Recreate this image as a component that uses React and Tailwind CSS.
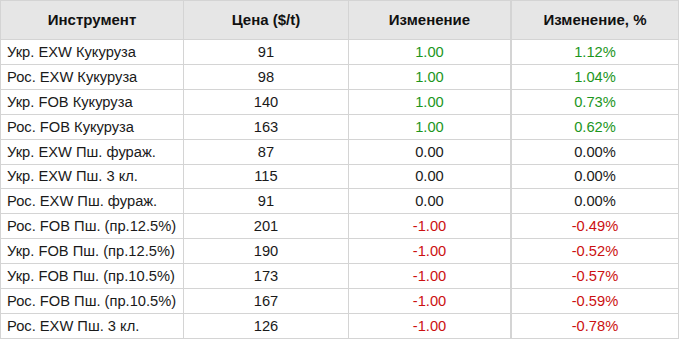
import React from "react";

const rows = [
  ["Укр. EXW Кукуруза", "91", "1.00", "1.12%", 1],
  ["Рос. EXW Кукуруза", "98", "1.00", "1.04%", 1],
  ["Укр. FOB Кукуруза", "140", "1.00", "0.73%", 1],
  ["Рос. FOB Кукуруза", "163", "1.00", "0.62%", 1],
  ["Укр. EXW Пш. фураж.", "87", "0.00", "0.00%", 0],
  ["Укр. EXW Пш. 3 кл.", "115", "0.00", "0.00%", 0],
  ["Рос. EXW Пш. фураж.", "91", "0.00", "0.00%", 0],
  ["Рос. FOB Пш. (пр.12.5%)", "201", "-1.00", "-0.49%", -1],
  ["Укр. FOB Пш. (пр.12.5%)", "190", "-1.00", "-0.52%", -1],
  ["Укр. FOB Пш. (пр.10.5%)", "173", "-1.00", "-0.57%", -1],
  ["Рос. FOB Пш. (пр.10.5%)", "167", "-1.00", "-0.59%", -1],
  ["Рос. EXW Пш. 3 кл.", "126", "-1.00", "-0.78%", -1],
];

export default function App() {
  return (
    <div
      className="w-[680px] h-[340px] bg-white text-[14.7px] text-[#1a1a1a]"
      style={{ fontFamily: '"Liberation Sans", Arial, sans-serif' }}
    >
      <div className="w-[679px] border border-[#d4d4d4]">
        <div className="flex h-[39px] bg-[#e6e6e6] border-b border-[#d4d4d4] font-bold text-[15px] text-[#111]">
          <div className="w-[183px] flex items-center justify-center border-r border-[#d4d4d4]">Инструмент</div>
          <div className="w-[165px] flex items-center justify-center border-r border-[#d4d4d4]">Цена ($/t)</div>
          <div className="w-[163px] flex items-center justify-center border-r-2 border-[#d4d4d4]">Изменение</div>
          <div className="flex-1 flex items-center justify-center">Изменение, %</div>
        </div>
        {rows.map((r, i) => {
          const color = r[4] > 0 ? "text-[#1d961d]" : r[4] < 0 ? "text-[#cc1111]" : "text-[#1a1a1a]";
          const h = i === 5 || i === 11 ? "h-[24px]" : "h-[25px]";
          return (
            <div key={i} className={`flex ${h} border-b border-[#d4d4d4] last:border-b-0`}>
              <div className="w-[183px] flex items-center pl-[6px] border-r border-[#d4d4d4]">{r[0]}</div>
              <div className="w-[165px] flex items-center justify-center border-r border-[#d4d4d4]">{r[1]}</div>
              <div className={`w-[163px] flex items-center justify-center border-r-2 border-[#d4d4d4] ${color}`}>{r[2]}</div>
              <div className={`flex-1 flex items-center justify-center ${color}`}>{r[3]}</div>
            </div>
          );
        })}
      </div>
    </div>
  );
}
